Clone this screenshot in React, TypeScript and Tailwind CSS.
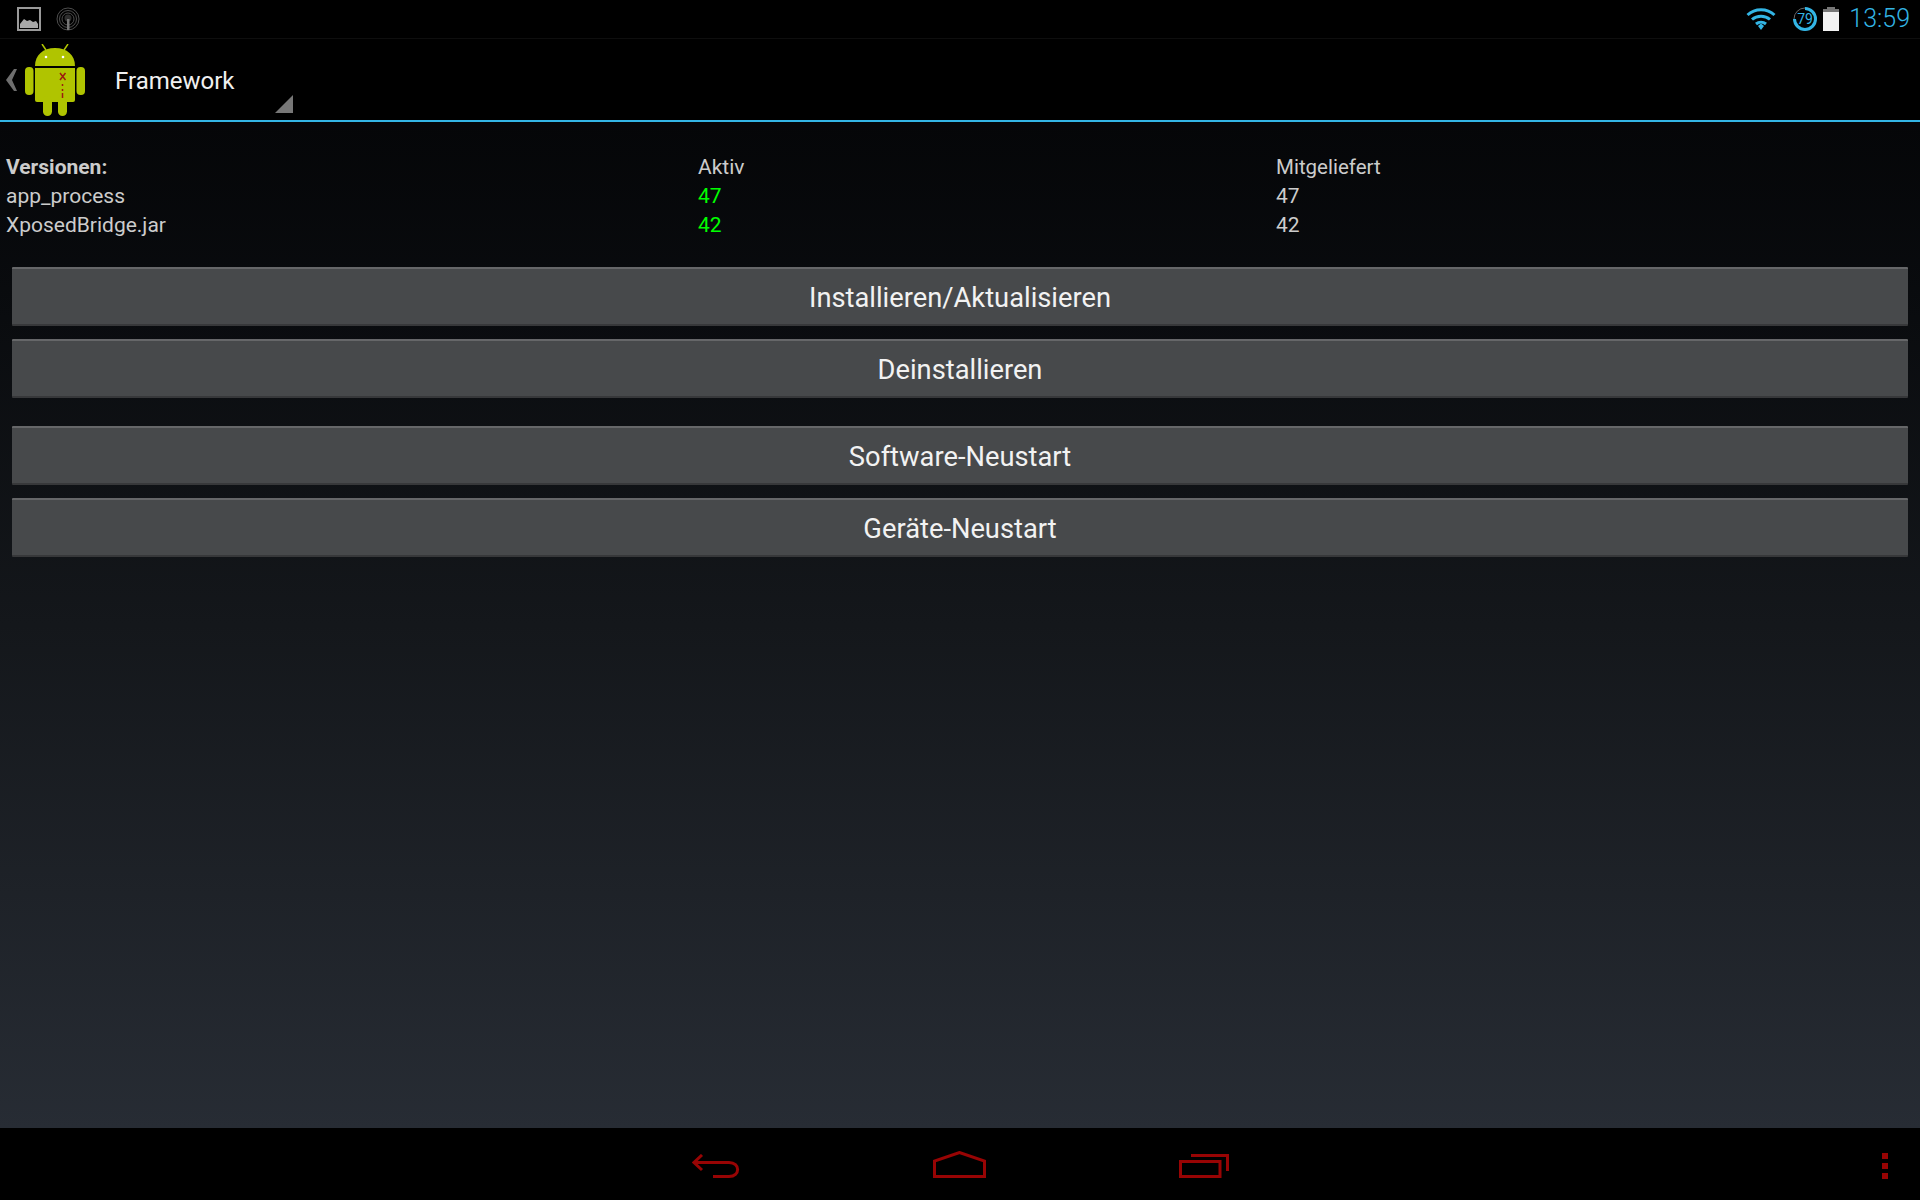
const font = { fontFamily: 'Roboto, sans-serif' };

const versions = [
  { name: 'app_process', active: '47', bundled: '47' },
  { name: 'XposedBridge.jar', active: '42', bundled: '42' },
];

const ActionButton = ({ label, className = '' }: { label: string; className?: string }) => (
  <button
    className={`flex h-[59px] w-full items-center justify-center rounded-[1px] border-t-2 border-b-2 border-t-[#666769] border-b-[#37383a] bg-[#47494b] pt-[3px] text-[27.3px] text-[#f2f2f2] ${className}`}
  >
    {label}
  </button>
);

const GalleryIcon = () => (
  <svg width="24" height="24" viewBox="0 0 24 24">
    <rect x="1" y="1" width="22" height="22" fill="none" stroke="#9a9a9a" strokeWidth="2" />
    <path d="M3 21 V17 L7 12 L10 14 L13 13 L16 15 L19 14 L21 17 V21 Z" fill="#a8a8a8" />
  </svg>
);

const PodcastIcon = () => (
  <svg width="24" height="24" viewBox="0 0 24 24" fill="none">
    <circle cx="12" cy="12" r="11" stroke="#4e4e4e" />
    <circle cx="12" cy="12" r="8.5" stroke="#4e4e4e" />
    <circle cx="12" cy="12" r="6" stroke="#4e4e4e" />
    <circle cx="12" cy="11" r="3.5" fill="#2e2e2e" />
    <rect x="11" y="12" width="2.5" height="11" fill="#777777" />
  </svg>
);

const WifiIcon = () => (
  <svg width="30" height="24" viewBox="0 0 30 24" fill="none" stroke="#33b5e5" strokeWidth="3">
    <path d="M1.5 8 C9 1 21 1 28.5 8" />
    <path d="M6 12.5 C11 8 19 8 24 12.5" />
    <path d="M10 17 C13 14.500 17 14.500 20 17" />
    <path d="M12 19 L15 16.500 L18 19 L15 23 Z" fill="#33b5e5" stroke="none" />
  </svg>
);

const UpdateRing = () => (
  <svg width="26" height="26" viewBox="0 0 26 26">
    <circle cx="13" cy="13" r="11" fill="none" stroke="#666666" strokeWidth="1" />
    <path d="M13 2.500 A10.500 10.500 0 1 1 2.500 13" fill="none" stroke="#33b5e5" strokeWidth="3" />
    <text x="13" y="18" textAnchor="middle" fontSize="14" fill="#33b5e5" fontFamily="Roboto, sans-serif">
      79
    </text>
  </svg>
);

const BatteryIcon = () => (
  <svg width="16" height="24" viewBox="0 0 16 24">
    <path d="M4 0 H12 V2 H16 V24 H0 V2 H4 Z" fill="#f2f2f2" />
    <path d="M4 0 H12 V2 H16 V5 H0 V2 H4 Z" fill="#777777" />
  </svg>
);

// viewBox uses the page coordinates of the logo
const AndroidLogo = () => (
  <svg width="60" height="72" viewBox="25 44 60 72">
    <path d="M42 44 L46 50 M68 44 L64 50" stroke="#b0c400" strokeWidth="1.500" />
    <path d="M35 66 C35 55 43 48 55 48 C67 48 75 55 75 66 Z" fill="#b0c400" />
    <circle cx="46" cy="57" r="1.300" fill="#ffffff" />
    <circle cx="63" cy="57" r="1.300" fill="#ffffff" />
    <path d="M35 68 H75 V100 Q75 102 73 102 H37 Q35 102 35 100 Z" fill="#b0c400" />
    <rect x="25" y="67" width="8.500" height="28" rx="4" fill="#b0c400" />
    <rect x="76.500" y="67" width="8.500" height="28" rx="4" fill="#b0c400" />
    <rect x="43" y="96" width="9" height="20" rx="4.500" fill="#b0c400" />
    <rect x="58" y="96" width="9" height="20" rx="4.500" fill="#b0c400" />
    <path d="M60 73 L65.500 80 M65.500 73 L60 80" stroke="#9c1c10" strokeWidth="1.500" />
    <path d="M62.500 84 V86 M62.500 89 V91 M62.500 93 V98" stroke="#9c1c10" strokeWidth="1.500" />
  </svg>
);

export default function App() {
  return (
    <div className="flex h-[1200px] w-[1920px] flex-col overflow-hidden bg-black text-[#cccccc]" style={font}>
      {/* status bar */}
      <div className="flex h-[39px] items-center justify-between border-b border-[#0e0e0e] bg-black pl-[17px] pr-[10px]">
        <div className="flex items-center gap-[15px]">
          <GalleryIcon />
          <PodcastIcon />
        </div>
        <div className="flex items-center">
          <WifiIcon />
          <div className="ml-[16px] mr-[5px]">
            <UpdateRing />
          </div>
          <BatteryIcon />
          <span className="ml-[10px] text-[25px] font-light text-[#33b5e5]">13:59</span>
        </div>
      </div>

      {/* action bar */}
      <div className="flex h-[83px] border-b-2 border-[#33b5e5] bg-black">
        <svg width="11" height="22" viewBox="0 0 11 22" className="ml-[6px] mt-[30px]">
          <path d="M8 0 H11 L6 11 L11 22 H8 L0 11 Z" fill="#6e6e6e" />
        </svg>
        <div className="ml-[8px] mt-[5px]">
          <AndroidLogo />
        </div>
        <span className="ml-[30px] mt-[26px] h-[32px] text-[24px] leading-[32px] text-[#f0f0f0]">Framework</span>
        <svg width="18" height="18" viewBox="0 0 18 18" className="ml-[41px] mt-[56px]">
          <path d="M18 0 V18 H0 Z" fill="#777777" />
        </svg>
      </div>

      <div className="flex-1 bg-gradient-to-b from-[#050608] via-[#14171b] to-[#272c34]">
        {/* versions */}
        <div className="flex flex-col px-[6px] pt-[31px] text-[21px] leading-[29px]">
          <div className="flex">
            <span className="w-[692px] font-bold">Versionen:</span>
            <span className="w-[578px]">Aktiv</span>
            <span className="text-[20.5px]">Mitgeliefert</span>
          </div>
          {versions.map(({ name, active, bundled }) => (
            <div key={name} className="flex">
              <span className="w-[692px]">{name}</span>
              <span className="w-[578px] text-[#00ff00]">{active}</span>
              <span>{bundled}</span>
            </div>
          ))}
        </div>

        {/* buttons */}
        <div className="mt-[27px] flex flex-col px-[12px]">
          <ActionButton label="Installieren/Aktualisieren" />
          <ActionButton label="Deinstallieren" className="mt-[13px]" />
          <ActionButton label="Software-Neustart" className="mt-[28px]" />
          <ActionButton label="Geräte-Neustart" className="mt-[13px]" />
        </div>
      </div>

      {/* nav bar */}
      <div className="flex h-[72px] items-start bg-black pl-[692px] pt-[23px]">
        <svg width="48" height="24" viewBox="0 0 48 24" fill="none" stroke="#980404" strokeWidth="3" className="mt-[3px]">
          <path d="M10 1 L2 8.500 L10 16" />
          <path d="M2 8.500 H37 C48.500 8.500 48.500 22.500 37 22.500 H21" />
        </svg>
        <svg width="53" height="27" viewBox="0 0 53 27" fill="none" stroke="#980404" strokeWidth="3" className="ml-[193px]">
          <path d="M1.500 25.500 V10 L26.500 1.500 L51.500 10 V25.500 Z" />
        </svg>
        <svg width="50" height="24" viewBox="0 0 50 24" fill="none" stroke="#980404" strokeWidth="3" className="ml-[193px] mt-[3px]">
          <path d="M12 1.500 H48.500 V17" />
          <rect x="1.500" y="7.500" width="39.500" height="15" />
        </svg>
        <div className="ml-[653px] mt-[2px] flex flex-col gap-[4px]">
          <span className="h-[6px] w-[6px] bg-[#980404]" />
          <span className="h-[6px] w-[6px] bg-[#980404]" />
          <span className="h-[6px] w-[6px] bg-[#980404]" />
        </div>
      </div>
    </div>
  );
}
